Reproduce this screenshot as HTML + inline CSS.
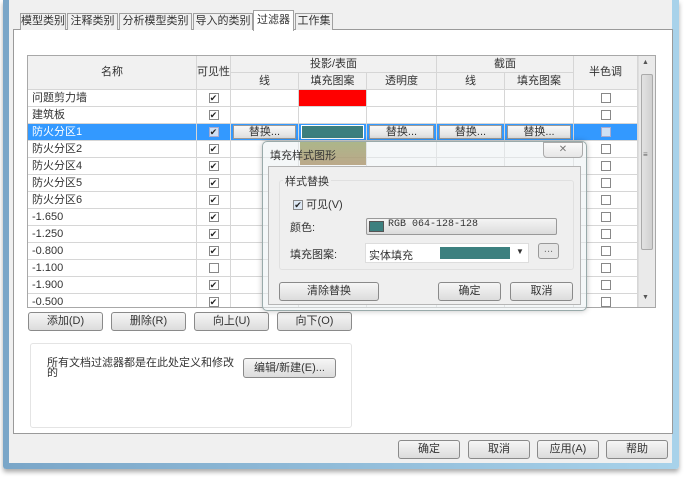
<!DOCTYPE html>
<html><head><meta charset="utf-8"><style>
*{box-sizing:border-box;margin:0;padding:0}
body{width:686px;height:477px;background:#fff;position:relative;overflow:hidden;font-family:"Liberation Sans","Noto Sans CJK SC",sans-serif;font-size:11px;color:#333}
.a{position:absolute}
.btn{position:absolute;border:1px solid #8a8a8a;border-radius:3px;background:linear-gradient(#f6f6f6,#dcdcdc);text-align:center;font-size:11px;color:#333}
.cell{position:absolute;border-right:1px solid #d6d6d6;border-bottom:1px solid #d6d6d6;height:17px;line-height:16px;text-align:center}
.cb{display:inline-block;width:10px;height:10px;border:1px solid #888;background:#fff;vertical-align:middle;position:relative;font-size:9px;line-height:8px;text-align:center;color:#222}
</style></head><body>
<div class="a" style="left:3px;top:0;width:676px;height:469px;background:linear-gradient(90deg,#7aa6c8,#a8d2ea);border-radius:0 0 3px 3px;box-shadow:0 3px 5px #aaa"></div>
<div class="a" style="left:9px;top:0;width:663px;height:463px;background:#f0f0f0"></div>
<div class="a" style="left:13px;top:29px;width:660px;height:405px;background:#fff;border:1px solid #9a9a9a"></div>
<div class="a" style="left:20px;top:13px;width:46px;height:17px;border:1px solid #a0a0a0;border-bottom:none;background:#f0f0f0;line-height:15px;text-align:center">模型类别</div>
<div class="a" style="left:67px;top:13px;width:51px;height:17px;border:1px solid #a0a0a0;border-bottom:none;background:#f0f0f0;line-height:15px;text-align:center">注释类别</div>
<div class="a" style="left:119px;top:13px;width:73px;height:17px;border:1px solid #a0a0a0;border-bottom:none;background:#f0f0f0;line-height:15px;text-align:center">分析模型类别</div>
<div class="a" style="left:193px;top:13px;width:60px;height:17px;border:1px solid #a0a0a0;border-bottom:none;background:#f0f0f0;line-height:15px;text-align:center">导入的类别</div>
<div class="a" style="left:253px;top:10px;width:41px;height:21px;border:1px solid #a0a0a0;border-bottom:none;background:#fff;line-height:18px;text-align:center">过滤器</div>
<div class="a" style="left:295px;top:13px;width:38px;height:17px;border:1px solid #a0a0a0;border-bottom:none;background:#f0f0f0;line-height:15px;text-align:center">工作集</div>

<div class="a" style="left:27px;top:55px;width:629px;height:253px;border:1px solid #a8a8a8;background:#fff;overflow:hidden">
 <div class="a" style="left:0;top:0;width:610px;height:34px;background:#f1f1f1"></div>
 <div class="cell" style="left:0;top:0;width:169px;height:34px;line-height:33px">名称</div>
 <div class="cell" style="left:169px;top:0;width:34px;height:34px;line-height:33px">可见性</div>
 <div class="cell" style="left:203px;top:0;width:206px">投影/表面</div>
 <div class="cell" style="left:409px;top:0;width:137px">截面</div>
 <div class="cell" style="left:546px;top:0;width:64px;height:34px;line-height:33px">半色调</div>
 <div class="cell" style="left:203px;top:17px;width:68px">线</div>
 <div class="cell" style="left:271px;top:17px;width:68px">填充图案</div>
 <div class="cell" style="left:339px;top:17px;width:70px">透明度</div>
 <div class="cell" style="left:409px;top:17px;width:68px">线</div>
 <div class="cell" style="left:477px;top:17px;width:69px">填充图案</div>
 <div id="rows"></div>
 <div class="a" style="left:610px;top:0;width:18px;height:253px;background:#eaeaea;border-left:1px solid #ddd"></div>
 <div class="a" style="left:614px;top:3px;font-size:7px;color:#555">▲</div>
 <div class="a" style="left:613px;top:18px;width:12px;height:176px;background:linear-gradient(90deg,#e2e2e2,#d0d0d0);border:1px solid #aaa;border-radius:2px"></div>
 <div class="a" style="left:615px;top:94px;font-size:8px;color:#666">≡</div>
 <div class="a" style="left:614px;top:238px;font-size:7px;color:#555">▼</div>
</div>
<script>
var names=["问题剪力墙","建筑板","防火分区1","防火分区2","防火分区4","防火分区5","防火分区6","-1.650","-1.250","-0.800","-1.100","-1.900","-0.500"];
var h="";
for(var i=0;i<names.length;i++){
 var t=34+i*17,sel=i==2;
 var bg=sel?"background:#3399ff;color:#fff;":"";
 h+='<div class="cell" style="left:0;top:'+t+'px;width:169px;text-align:left;padding-left:4px;'+bg+'">'+names[i]+'</div>';
 h+='<div class="cell" style="left:169px;top:'+t+'px;width:34px;'+bg+'"><span class="cb" style="'+(sel?'background:#cfe0f4;border-color:#aac':'')+'">'+(i==10?'':'✔')+'</span></div>';
 var cols=[[203,68],[271,68],[339,70],[409,68],[477,69]];
 for(var c=0;c<5;c++){
  var ex="";
  if(i==0&&c==1)ex="background:#ff0000;";
  if(sel){ex="background:#3399ff;padding:1px 2px;";}
  var inner="";
  if(sel){inner=c==1?'<div style="background:#3c7f7e;height:14px;border:1px solid #fff"></div>':'<div style="background:linear-gradient(#f8f8f8,#dedede);height:14px;line-height:13px;border:1px solid #999;color:#333">替换...</div>';}
  h+='<div class="cell" style="left:'+cols[c][0]+'px;top:'+t+'px;width:'+cols[c][1]+'px;'+ex+'">'+inner+'</div>';
 }
 h+='<div class="cell" style="left:546px;top:'+t+'px;width:64px;'+bg+'"><span class="cb" style="'+(sel?'background:#cfe0f4;border-color:#aac':'')+'"></span></div>';
}
document.getElementById("rows").innerHTML=h;
</script>

<div class="btn" style="left:28px;top:312px;width:75px;height:19px;line-height:17px">添加(D)</div>
<div class="btn" style="left:111px;top:312px;width:75px;height:19px;line-height:17px">删除(R)</div>
<div class="btn" style="left:194px;top:312px;width:75px;height:19px;line-height:17px">向上(U)</div>
<div class="btn" style="left:277px;top:312px;width:75px;height:19px;line-height:17px">向下(O)</div>

<div class="a" style="left:30px;top:343px;width:322px;height:85px;border:1px solid #e4e4e4;border-radius:3px"></div>
<div class="a" style="left:47px;top:358px;width:190px;line-height:10px;font-size:11px">所有文档过滤器都是在此处定义和修改的</div>
<div class="btn" style="left:243px;top:358px;width:93px;height:20px;line-height:18px">编辑/新建(E)...</div>

<div class="btn" style="left:398px;top:440px;width:62px;height:19px;line-height:17px">确定</div>
<div class="btn" style="left:468px;top:440px;width:62px;height:19px;line-height:17px">取消</div>
<div class="btn" style="left:537px;top:440px;width:62px;height:19px;line-height:17px">应用(A)</div>
<div class="btn" style="left:606px;top:440px;width:62px;height:19px;line-height:17px">帮助</div>

<div class="a" style="left:262px;top:141px;width:325px;height:170px;border:1px solid #9aa;border-radius:5px;background:rgba(235,240,243,0.55);box-shadow:0 0 6px rgba(0,0,0,.25)"></div>
<div class="a" style="left:300px;top:142px;width:66px;height:23px;background:linear-gradient(#8d9a5a,#a3875a);opacity:.7"></div>
<div class="a" style="left:270px;top:147px;font-size:11px">填充样式图形</div>
<div class="a" style="left:543px;top:142px;width:40px;height:16px;border:1px solid #aaa;border-radius:0 0 4px 4px;background:linear-gradient(#fafafa,#e6e6e6);text-align:center;line-height:14px;color:#777;font-size:10px">✕</div>
<div class="a" style="left:268px;top:166px;width:313px;height:139px;border:1px solid #b5b5b5;background:#efefef"></div>
<div class="a" style="left:279px;top:180px;width:295px;height:90px;border:1px solid #e0e0e0;border-radius:3px"></div>
<div class="a" style="left:283px;top:173px;background:#efefef;padding:0 2px">样式替换</div>
<div class="a" style="left:293px;top:196px"><span class="cb" style="background:#dde8f4">✔</span> 可见(V)</div>
<div class="a" style="left:290px;top:219px">颜色:</div>
<div class="a" style="left:366px;top:218px;width:191px;height:17px;border:1px solid #999;border-radius:2px;background:linear-gradient(#f4f4f4,#dcdcdc)"></div>
<div class="a" style="left:369px;top:221px;width:15px;height:11px;background:#3c807f;border:1px solid #555"></div>
<div class="a" style="left:388px;top:219px;font-family:'Liberation Mono',monospace;font-size:10px">RGB 064-128-128</div>
<div class="a" style="left:290px;top:246px">填充图案:</div>
<div class="a" style="left:365px;top:243px;width:164px;height:20px;background:#fff;border:1px solid #ddd"></div>
<div class="a" style="left:369px;top:247px">实体填充</div>
<div class="a" style="left:440px;top:247px;width:70px;height:12px;background:#3c807f"></div>
<div class="a" style="left:516px;top:247px;font-size:8px">▼</div>
<div class="a" style="left:538px;top:243px;width:21px;height:16px;border:1px solid #999;border-radius:3px;background:#e6e6e6;text-align:center;line-height:10px;color:#777">...</div>
<div class="btn" style="left:279px;top:282px;width:100px;height:19px;line-height:17px">清除替换</div>
<div class="btn" style="left:438px;top:282px;width:63px;height:19px;line-height:17px">确定</div>
<div class="btn" style="left:510px;top:282px;width:63px;height:19px;line-height:17px">取消</div>
</body></html>
